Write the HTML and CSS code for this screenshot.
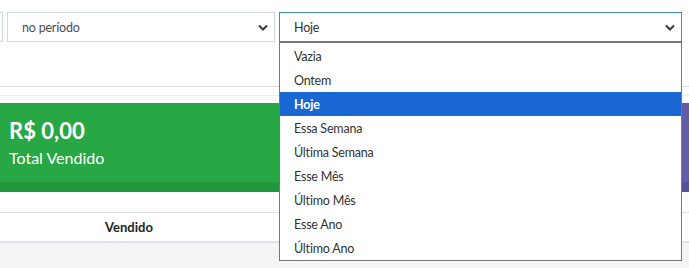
FILE: index.html
```html
<!DOCTYPE html>
<html lang="pt-BR">
<head>
    <meta charset="UTF-8">
    <title>Vendas</title>
    <link rel="stylesheet" href="styles.css">
</head>
<body>
    <div class="filters">
        <div class="select first"></div>
        <div class="select period">
            <span>no período</span>
            <svg class="chev" width="10" height="7" viewBox="0 0 10 7"><path d="M1 1.5 L5 5.5 L9 1.5" fill="none" stroke="#343a40" stroke-width="2"/></svg>
        </div>
        <div class="select range open">
            <span>Hoje</span>
            <svg class="chev" width="10" height="7" viewBox="0 0 10 7"><path d="M1 1.5 L5 5.5 L9 1.5" fill="none" stroke="#343a40" stroke-width="2"/></svg>
            <!-- opened option list -->
            <ul class="options">
                <li>Vazia</li>
                <li>Ontem</li>
                <li class="selected">Hoje</li>
                <li>Essa Semana</li>
                <li>Última Semana</li>
                <li>Esse Mês</li>
                <li>Último Mês</li>
                <li>Esse Ano</li>
                <li>Último Ano</li>
            </ul>
        </div>
    </div>

    <div class="divider"></div>

    <div class="boxes">
        <div class="small-box green">
            <div class="inner">
                <h3>R$ 0,00</h3>
                <p>Total Vendido</p>
            </div>
            <div class="footer"></div>
        </div>
        <div class="small-box blue">
            <div class="inner"></div>
            <div class="footer"></div>
        </div>
        <div class="small-box purple">
            <div class="inner"></div>
            <div class="footer"></div>
        </div>
    </div>

    <table class="summary">
        <tr>
            <th class="sold">Vendido</th>
            <th></th>
        </tr>
    </table>
</body>
</html>
```

FILE: styles.css
```css
body {
    margin: 0;
    font-family: Lato, "Noto Sans", sans-serif;
    font-size: 12.5px;
    letter-spacing: -0.2px;
    color: #495057;
    background: #f4f4f4;
    overflow: hidden;
    height: 268px;
}
.filters {
    display: flex;
    gap: 4px;
    padding: 12px 0 0;
    margin-left: -98px;
    height: 74px;
    background: #fff;
    border-bottom: 1px solid #dcdcdc;
}
.select {
    position: relative;
    box-sizing: border-box;
    height: 30px;
    border: 1px solid #d2d6de;
    background: #fff;
    display: flex;
    align-items: center;
    padding: 0 6px 0 14px;
}
.select .chev {
    margin-left: auto;
}
.first {
    width: 101px;
}
.period {
    width: 268px;
}
.range {
    width: 403px;
    border-color: #3c8dbc;
    color: #333;
}
.options {
    position: absolute;
    top: 29px;
    left: -1px;
    right: -1px;
    margin: 0;
    padding: 1px 0 0;
    list-style: none;
    background: #fff;
    border: 1px solid #767676;
    z-index: 10;
}
.options li {
    height: 24px;
    line-height: 25px;
    padding: 0 14px;
    color: #333;
}
.options li.selected {
    background: #1967d2;
    color: #fff;
    font-weight: bold;
}
.divider {
    height: 8px;
    background: #fff;
    border-bottom: 1px solid #ededed;
}
.boxes {
    display: flex;
    gap: 8px;
    padding-top: 7px;
    padding-bottom: 20px;
    background: #fff;
}
.small-box {
    color: #fff;
    flex: none;
}
.small-box .inner {
    height: 79px;
    padding: 0 9px;
    overflow: hidden;
}
.small-box h3 {
    margin: 14px 0 0;
    font-size: 22px;
    font-weight: bold;
    line-height: 28px;
    letter-spacing: 0;
}
.small-box p {
    margin: 2px 0 0;
    font-size: 16px;
    line-height: 22px;
    letter-spacing: 0;
}
.small-box .footer {
    height: 10px;
    background: rgba(0, 0, 0, 0.1);
}
.green {
    width: 279px;
    background: #28a745;
}
.blue {
    width: 387px;
    background: #17a2b8;
}
.purple {
    flex: 1;
    min-width: 0;
    background: #605ca8;
}
.summary {
    width: 100%;
    border-collapse: collapse;
    table-layout: fixed;
    background: #fff;
}
.summary th {
    height: 28px;
    padding: 0;
    border-top: 1px solid #dee2e6;
    border-bottom: 2px solid #dee2e6;
    color: #212529;
    font-size: 13px;
    letter-spacing: 0;
}
.summary th.sold {
    width: 258px;
}
```
